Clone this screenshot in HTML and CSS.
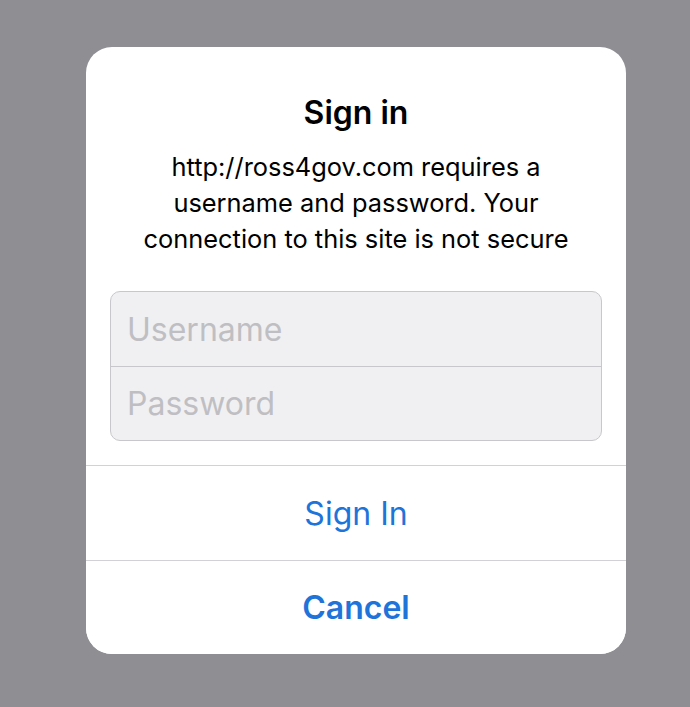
FILE: index.html
```html
<!DOCTYPE html>
<html lang="en">
<head>
    <meta charset="UTF-8">
    <meta name="viewport" content="width=device-width, initial-scale=1.0">
    <title>Sign in</title>
    <link rel="stylesheet" href="styles.css">
</head>
<body>
    <div class="alert">
        <div class="alert-body">
            <h1 class="alert-title">Sign in</h1>
            <p class="alert-message">http://ross4gov.com requires a<br>username and password. Your<br>connection to this site is not secure</p>
            <div class="field-group">
                <input class="field" type="text" placeholder="Username">
                <input class="field" type="password" placeholder="Password">
            </div>
        </div>
        <button class="alert-button">Sign In</button>
        <button class="alert-button cancel">Cancel</button>
    </div>
</body>
</html>
```

FILE: styles.css
```css
body {
    background-color: #8e8e93;
    font-family: 'Inter', 'Liberation Sans', sans-serif;
    margin: 0;
    padding: 47px 0 0 86px;
    height: 660px;
}
.alert {
    width: 540px;
    background-color: white;
    border-radius: 26px;
    overflow: hidden;
    display: flex;
    flex-direction: column;
}
.alert-body {
    padding: 48px 24px 24px;
    text-align: center;
    border-bottom: 1px solid #d2d2d6;
}
.alert-title {
    margin: 0;
    font-size: 32px;
    font-weight: 600;
    line-height: 36px;
    color: #000;
}
.alert-message {
    margin: 18px 0 0;
    font-size: 25.4px;
    line-height: 36px;
    color: #000;
}
.field-group {
    margin-top: 34px;
    border: 1px solid #c8c8cc;
    border-radius: 10px;
    background-color: #f0f0f2;
    display: flex;
    flex-direction: column;
    overflow: hidden;
}
.field {
    height: 74px;
    border: none;
    background: transparent;
    padding: 0 16px;
    font-family: inherit;
    font-size: 32px;
    color: #000;
    outline: none;
}
.field + .field {
    border-top: 1px solid #c8c8cc;
    height: 73px;
}
.field::placeholder {
    color: #bfbfc3;
}
.alert-button {
    height: 94px;
    border: none;
    background: white;
    font-family: inherit;
    font-size: 32px;
    color: #1f74d9;
    cursor: pointer;
}
.alert-button + .alert-button {
    border-top: 1px solid #d2d2d6;
}
.alert-button.cancel {
    font-weight: 600;
}
```
